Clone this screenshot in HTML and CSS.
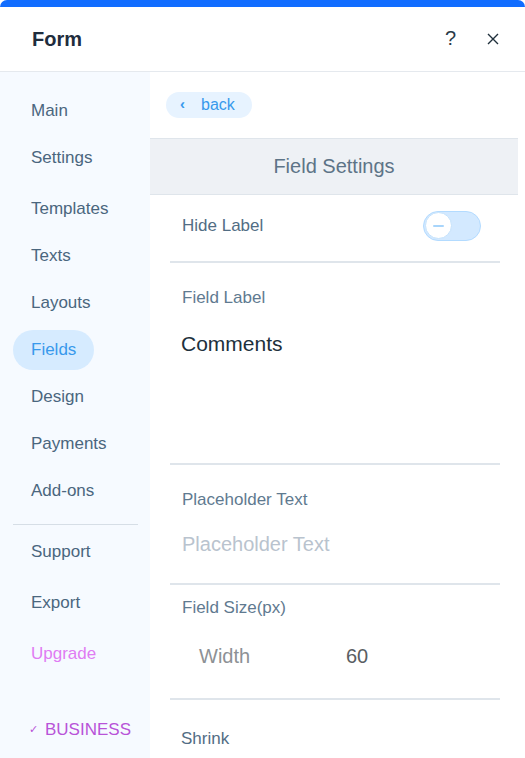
FILE: index.html
```html
<!DOCTYPE html>
<html>
<head>
<meta charset="utf-8">
<link rel="stylesheet" href="styles.css">
</head>
<body>
<div class="panel">
  <div class="topbar"></div>
  <header class="header">
    <div class="title">Form</div>
    <div class="actions">
      <span class="help">?</span>
      <svg class="close" width="12" height="12" viewBox="0 0 12 12"><path d="M1 1L11 11M11 1L1 11" stroke="#20303c" stroke-width="1.4" fill="none"/></svg>
    </div>
  </header>
  <div class="body">
    <nav class="sidebar">
      <div class="nav-item">Main</div>
      <div class="nav-item">Settings</div>
      <div class="nav-item gap">Templates</div>
      <div class="nav-item">Texts</div>
      <div class="nav-item">Layouts</div>
      <div class="nav-item active">Fields</div>
      <div class="nav-item">Design</div>
      <div class="nav-item">Payments</div>
      <div class="nav-item">Add-ons</div>
      <div class="nav-divider"></div>
      <div class="nav-item">Support</div>
      <div class="nav-item spaced">Export</div>
      <div class="nav-item spaced upgrade">Upgrade</div>
      <div class="nav-item business"><span class="check">&#10003;</span>BUSINESS</div>
    </nav>
    <main class="content">
      <div class="back-wrap"><span class="back"><span class="chev">&#8249;</span>back</span></div>
      <div class="section-title">Field Settings</div>
      <div class="row toggle-row">
        <span class="label dark">Hide Label</span>
        <span class="toggle"><span class="knob"><span class="minus"></span></span></span>
      </div>
      <div class="section s-label">
        <div class="label">Field Label</div>
        <div class="value">Comments</div>
      </div>
      <div class="section s-placeholder">
        <div class="label">Placeholder Text</div>
        <div class="value placeholder">Placeholder Text</div>
      </div>
      <div class="section s-size">
        <div class="label">Field Size(px)</div>
        <div class="size-row"><span class="size-name">Width</span><span class="size-val">60</span></div>
      </div>
      <div class="section s-shrink last">
        <div class="label">Shrink</div>
      </div>
    </main>
  </div>
</div>
</body>
</html>
```

FILE: styles.css
```css
* { box-sizing: border-box; }
html, body { margin: 0; padding: 0; background: #ffffff; }
body { font-family: "Liberation Sans", Arial, sans-serif; width: 525px; height: 758px; overflow: hidden; }

.panel { width: 525px; height: 758px; display: flex; flex-direction: column; background: #fff; }
.topbar { height: 7px; background: #116dff; border-radius: 7px 7px 0 0; flex: none; }

.header { height: 65px; flex: none; display: flex; align-items: center; justify-content: space-between; padding: 0 26px 0 32px; border-bottom: 1px solid #e5e9ee; }
.title { font-size: 20px; font-weight: bold; color: #1f2d3d; margin-top: 0; }
.actions { display: flex; align-items: center; gap: 31px; }
.help { font-size: 20px; color: #2b3a48; line-height: 20px; margin-top: -2px; }
.close { display: block; }

.body { flex: 1; display: flex; min-height: 0; }
.sidebar { width: 150px; flex: none; background: #f6faff; padding-top: 19px; display: flex; flex-direction: column; align-items: flex-start; }
.nav-item { margin-left: 13px; padding: 0 18px; height: 40px; line-height: 40px; border-radius: 20px; font-size: 17px; color: #4a667e; margin-bottom: 7px; white-space: nowrap; }
.nav-item.gap { margin-top: 4px; }
.nav-item.active { background: #d6ebff; color: #3899ec; }
.nav-divider { width: 125px; margin: 6px 0 7px 13px; height: 1px; background: #d6dee6; }
.nav-item.spaced { margin-top: 4px; }
.nav-item.upgrade { color: #e07cf3; margin-bottom: 35px; }
.nav-item.business { color: #b853d8; padding-left: 16px; }
.check { font-size: 11px; margin-right: 7px; color: #b853d8; vertical-align: 2px; }

.content { width: 368px; flex: none; display: flex; flex-direction: column; }
.back-wrap { padding: 20px 0 0 16px; height: 66px; }
.back { display: inline-flex; align-items: center; height: 26px; padding: 0 17px 0 14px; background: #e7f3ff; border-radius: 13px; color: #3899ec; font-size: 16px; }
.chev { font-size: 15px; margin-right: 16px; font-weight: bold; margin-top: -3px; }

.section-title { height: 57px; background: #eef1f5; border-top: 1px solid #dfe5eb; border-bottom: 1px solid #dfe5eb; display: flex; align-items: center; justify-content: center; font-size: 20px; color: #5d7487; }

.row, .section { margin: 0 18px 0 20px; border-bottom: 2px solid #dfe5eb; padding-left: 12px; }
.toggle-row { height: 68px; display: flex; align-items: center; justify-content: space-between; padding-bottom: 5px; padding-right: 19px; }
.label { font-size: 17px; color: #5f7a90; line-height: 20px; }
.label.dark { color: #526d84; }

.toggle { width: 58px; height: 30px; border-radius: 15px; background: #d3e9ff; border: 1px solid #b3dbff; display: flex; align-items: center; padding-left: 1px; }
.knob { width: 27px; height: 27px; border-radius: 50%; background: #fff; border: 1px solid #c6e3fc; display: flex; align-items: center; justify-content: center; }
.minus { width: 11px; height: 2px; background: #a8d5fb; border-radius: 1px; }

.value { font-size: 20px; line-height: 24px; color: #20303c; }
.s-label { height: 202px; padding-top: 25px; }
.s-label .value { margin-top: 24px; margin-left: -1px; font-size: 21px; }
.s-placeholder { height: 120px; padding-top: 25px; }
.s-placeholder .value { margin-top: 22px; }
.value.placeholder { color: #b9c3ce; }
.s-size { height: 115px; padding-top: 13px; }
.size-row { margin-top: 26px; display: flex; font-size: 20px; line-height: 24px; padding-left: 17px; }
.size-name { width: 147px; color: #8d9195; }
.size-val { color: #5a5e63; }
.s-shrink { border-bottom: none; padding-top: 29px; }
.s-shrink .label { margin-left: -1px; color: #526d84; }
```
